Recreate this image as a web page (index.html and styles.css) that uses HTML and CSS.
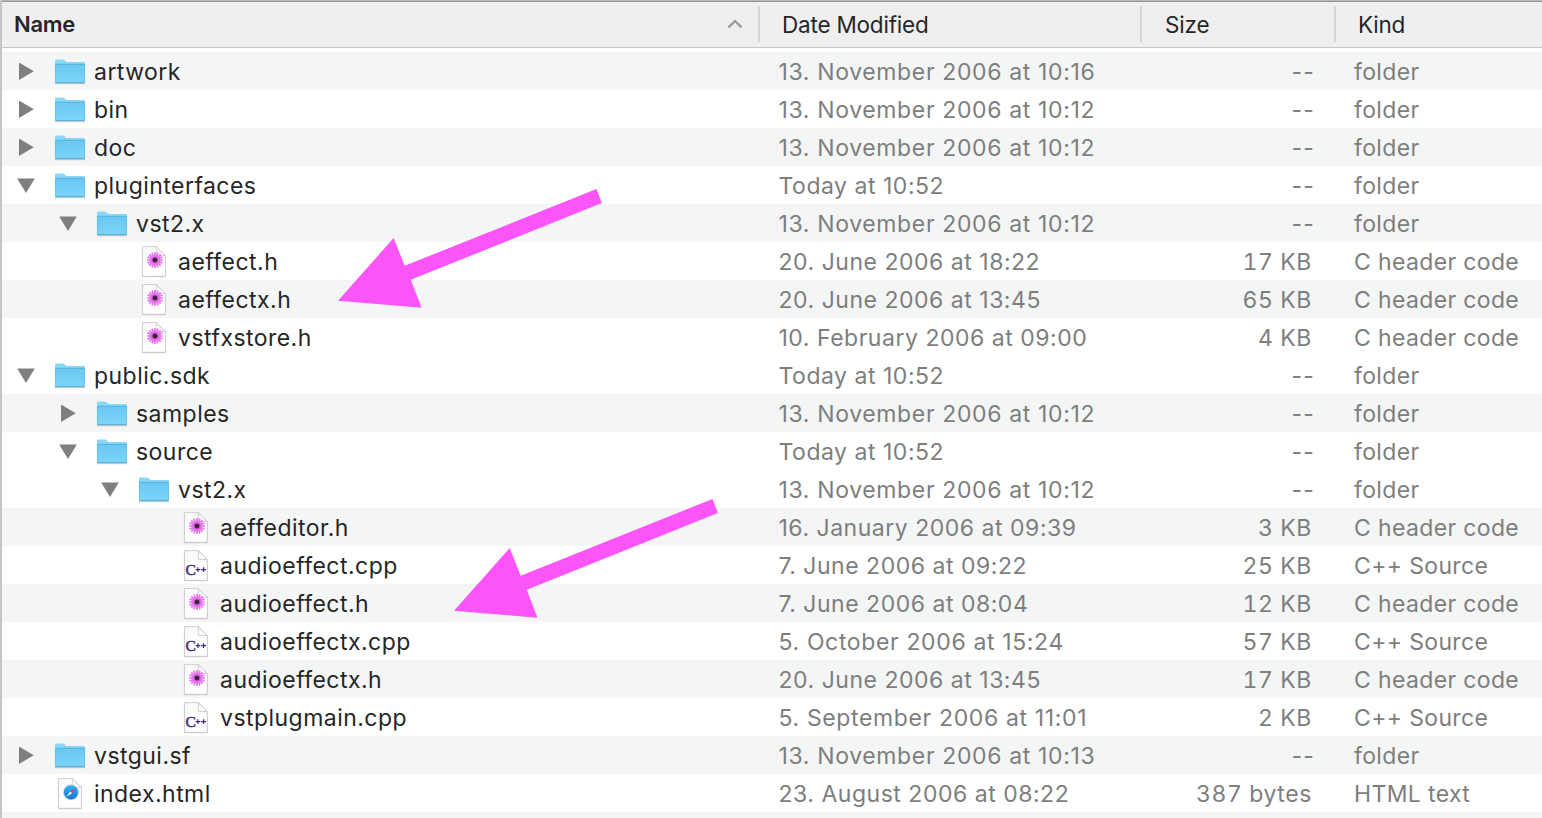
FILE: index.html
```html
<!DOCTYPE html>
<html lang="en">
<head>
<meta charset="utf-8">
<title>Files</title>
<link rel="stylesheet" href="styles.css">
</head>
<body>
<svg class="defs" aria-hidden="true">
  <defs>
    <linearGradient id="folder-fill" x1="0" y1="0" x2="0" y2="1"><stop offset="0" stop-color="#69c8f3"/><stop offset="1" stop-color="#7dd4f8"/></linearGradient>
    <linearGradient id="page-fill" x1="0" y1="0" x2="1" y2="1"><stop offset="0" stop-color="#f7f7f7"/><stop offset=".5" stop-color="#fff"/></linearGradient>
    <linearGradient id="compass-fill" x1="0" y1="0" x2="0" y2="1"><stop offset="0" stop-color="#2bb5f2"/><stop offset="1" stop-color="#1b6fdc"/></linearGradient>
  </defs>
  <symbol id="right" viewBox="0 0 18 18"><path d="M2 -.5L16.8 8.2L2 17Z" fill="#7f7f7f"/></symbol>
  <symbol id="down" viewBox="0 0 18 18"><path d="M.2 1.5H17.8L9 16Z" fill="#7f7f7f"/></symbol>
  <symbol id="folder" viewBox="0 0 32 32">
    <path d="M1 27H31V28.2H1Z" fill="#000" opacity=".2"/>
    <path d="M1 4.7Q1 3.5 2.2 3.5H9Q10 3.5 10.8 4.4L12 5.5Q12.6 6 13.6 6H29.8Q31 6 31 7.2V26Q31 27 30 27H2Q1 27 1 26Z" fill="#8ad8f8"/>
    <path d="M1 8.5H31V26Q31 27 30 27H2Q1 27 1 26Z" fill="url(#folder-fill)"/>
    <path d="M1 8.3H31M1.5 26.6H30.5" stroke="#4eaed8" stroke-width=".9" fill="none"/>
    <path d="M1.4 8V26M30.6 8V26" stroke="#61bde3" stroke-width=".6"/>
  </symbol>
  <symbol id="page" viewBox="0 0 32 32">
    <path d="M4.2 1.3H18.4L27.6 10.3V31.2H4.2Z" fill="#000" opacity=".16"/>
    <path d="M4.4 .6H18.4L27.4 9.6V30.3H4.4Z" fill="url(#page-fill)" stroke="#c4c4c4" stroke-width=".8"/>
    <path d="M18.3 .8V9.5H27.2Z" fill="#fafafa" stroke="#c6c6c6" stroke-width=".8"/>
  </symbol>
  <symbol id="header" viewBox="0 0 32 32">
    <use href="#page"/>
    <g transform="translate(17 14)">
      <circle r="5.5" fill="#f096f4"/>
      <path d="M0-8V8M-8 0H8M-5.7-5.7L5.7 5.7M-5.7 5.7L5.7-5.7M-3.1-7.4L3.1 7.4M3.1-7.4L-3.1 7.4M-7.4-3.1L7.4 3.1M-7.4 3.1L7.4-3.1" stroke="#e874ef" stroke-width="1.7"/>
      <path d="M0-4.4V4.4M-4.4 0H4.4M-3.1-3.1L3.1 3.1M-3.1 3.1L3.1-3.1" stroke="#cc5cd6" stroke-width=".8"/>
      <circle r="2.7" fill="#85307e"/><circle r="2.1" fill="#33252b"/>
    </g>
  </symbol>
  <symbol id="source" viewBox="0 0 32 32">
    <use href="#page"/>
    <text class="icon-letter" x="5.6" y="25.2">C</text>
    <path d="M15.6 19.7H20.4M18 17.3V22.1M21.2 19.7H26M23.6 17.3V22.1" stroke="#44267f" stroke-width="1.2"/>
  </symbol>
  <symbol id="html" viewBox="0 0 32 32">
    <use href="#page"/>
    <circle cx="17" cy="14.3" r="8" fill="#d0d8df"/>
    <circle cx="17" cy="14.3" r="7.1" fill="url(#compass-fill)"/>
    <path d="M21.6 9.8L18 15.2L16.2 13.4Z" fill="#ef3d42"/>
    <path d="M12.4 18.8L16.2 13.4L18 15.2Z" fill="#fff"/>
  </symbol>
</svg>
<main class="finder">
  <div class="topline"></div>
  <header class="head">
    <div class="col col-name">Name<svg class="sort" viewBox="0 0 16 10"><path d="M1.5 8.3L8 2L14.5 8.3" fill="none" stroke="#9a9a9a" stroke-width="2.3"/></svg></div>
    <div class="col">Date Modified</div>
    <div class="col col-size">Size</div>
    <div class="col">Kind</div>
  </header>
  <div class="rows">
    <div class="row alt"><div class="name"><svg class="tri"><use href="#right"/></svg><svg class="icon"><use href="#folder"/></svg><span>artwork</span></div><div class="date wide">13. November 2006 at 10:16</div><div class="size none">--</div><div class="kind">folder</div></div>
    <div class="row"><div class="name"><svg class="tri"><use href="#right"/></svg><svg class="icon"><use href="#folder"/></svg><span>bin</span></div><div class="date wide">13. November 2006 at 10:12</div><div class="size none">--</div><div class="kind">folder</div></div>
    <div class="row alt"><div class="name"><svg class="tri"><use href="#right"/></svg><svg class="icon"><use href="#folder"/></svg><span>doc</span></div><div class="date wide">13. November 2006 at 10:12</div><div class="size none">--</div><div class="kind">folder</div></div>
    <div class="row"><div class="name"><svg class="tri"><use href="#down"/></svg><svg class="icon"><use href="#folder"/></svg><span>pluginterfaces</span></div><div class="date">Today at 10:52</div><div class="size none">--</div><div class="kind">folder</div></div>
    <div class="row alt"><div class="name l1"><svg class="tri"><use href="#down"/></svg><svg class="icon"><use href="#folder"/></svg><span>vst2.x</span></div><div class="date wide">13. November 2006 at 10:12</div><div class="size none">--</div><div class="kind">folder</div></div>
    <div class="row"><div class="name l2"><svg class="tri"></svg><svg class="icon"><use href="#header"/></svg><span>aeffect.h</span></div><div class="date">20. June 2006 at 18:22</div><div class="size">17 KB</div><div class="kind">C header code</div></div>
    <div class="row alt"><div class="name l2"><svg class="tri"></svg><svg class="icon"><use href="#header"/></svg><span>aeffectx.h</span></div><div class="date">20. June 2006 at 13:45</div><div class="size">65 KB</div><div class="kind">C header code</div></div>
    <div class="row"><div class="name l2"><svg class="tri"></svg><svg class="icon"><use href="#header"/></svg><span>vstfxstore.h</span></div><div class="date">10. February 2006 at 09:00</div><div class="size">4 KB</div><div class="kind">C header code</div></div>
    <div class="row"><div class="name"><svg class="tri"><use href="#down"/></svg><svg class="icon"><use href="#folder"/></svg><span>public.sdk</span></div><div class="date">Today at 10:52</div><div class="size none">--</div><div class="kind">folder</div></div>
    <div class="row alt"><div class="name l1"><svg class="tri"><use href="#right"/></svg><svg class="icon"><use href="#folder"/></svg><span>samples</span></div><div class="date wide">13. November 2006 at 10:12</div><div class="size none">--</div><div class="kind">folder</div></div>
    <div class="row"><div class="name l1"><svg class="tri"><use href="#down"/></svg><svg class="icon"><use href="#folder"/></svg><span>source</span></div><div class="date">Today at 10:52</div><div class="size none">--</div><div class="kind">folder</div></div>
    <div class="row"><div class="name l2"><svg class="tri"><use href="#down"/></svg><svg class="icon"><use href="#folder"/></svg><span>vst2.x</span></div><div class="date wide">13. November 2006 at 10:12</div><div class="size none">--</div><div class="kind">folder</div></div>
    <div class="row alt"><div class="name l3"><svg class="tri"></svg><svg class="icon"><use href="#header"/></svg><span>aeffeditor.h</span></div><div class="date">16. January 2006 at 09:39</div><div class="size">3 KB</div><div class="kind">C header code</div></div>
    <div class="row"><div class="name l3"><svg class="tri"></svg><svg class="icon"><use href="#source"/></svg><span>audioeffect.cpp</span></div><div class="date">7. June 2006 at 09:22</div><div class="size">25 KB</div><div class="kind">C++ Source</div></div>
    <div class="row alt"><div class="name l3"><svg class="tri"></svg><svg class="icon"><use href="#header"/></svg><span>audioeffect.h</span></div><div class="date">7. June 2006 at 08:04</div><div class="size">12 KB</div><div class="kind">C header code</div></div>
    <div class="row"><div class="name l3"><svg class="tri"></svg><svg class="icon"><use href="#source"/></svg><span>audioeffectx.cpp</span></div><div class="date wide">5. October 2006 at 15:24</div><div class="size">57 KB</div><div class="kind">C++ Source</div></div>
    <div class="row alt"><div class="name l3"><svg class="tri"></svg><svg class="icon"><use href="#header"/></svg><span>audioeffectx.h</span></div><div class="date">20. June 2006 at 13:45</div><div class="size">17 KB</div><div class="kind">C header code</div></div>
    <div class="row"><div class="name l3"><svg class="tri"></svg><svg class="icon"><use href="#source"/></svg><span>vstplugmain.cpp</span></div><div class="date wide">5. September 2006 at 11:01</div><div class="size">2 KB</div><div class="kind">C++ Source</div></div>
    <div class="row alt"><div class="name"><svg class="tri"><use href="#right"/></svg><svg class="icon"><use href="#folder"/></svg><span>vstgui.sf</span></div><div class="date wide">13. November 2006 at 10:13</div><div class="size none">--</div><div class="kind">folder</div></div>
    <div class="row"><div class="name"><svg class="tri"></svg><svg class="icon"><use href="#html"/></svg><span>index.html</span></div><div class="date">23. August 2006 at 08:22</div><div class="size">387 bytes</div><div class="kind">HTML text</div></div>
    <div class="row alt"></div>
  </div>
  <svg class="arrows" viewBox="0 0 1542 818">
    <g fill="#fb55fa">
      <path id="arrow" d="M338 300.7L393.7 238L404.7 265.8L596.5 189L601.8 203L410.8 279.8L421.5 307.7Z"/>
      <use href="#arrow" x="116" y="310"/>
    </g>
  </svg>
</main>
</body>
</html>
```

FILE: styles.css
```css
* { box-sizing: border-box; }
body { margin: 0; background: #fff; overflow: hidden; }
.defs { position: absolute; width: 0; height: 0; }
.finder {
  position: relative;
  width: 1542px;
  height: 818px;
  overflow: hidden;
  border-left: 2px solid #c8c5c8;
  font-family: Inter, "Liberation Sans", sans-serif;
  font-size: 23px;
  color: #262626;
}
.topline { height: 2px; background: linear-gradient(#b8b8b8 50%, #989898 50%); }
.head {
  display: grid;
  grid-template-columns: 758px 382px 194px 1fr;
  height: 46px;
  padding-top: 4px;
  background: #efefef;
  border-bottom: 1px solid #c6c6c6;
}
.col {
  display: flex;
  align-items: center;
  height: 36px;
  padding: 0 0 0 22px;
  border-right: 2px solid #d6d6d6;
  font-size: 22.5px;
  letter-spacing: -.2px;
}
.col:last-child { border-right: 0; }
.col-size { padding-left: 23px; }
.col-name {
  justify-content: space-between;
  padding: 0 15px 0 12px;
  font-size: 22px;
  font-weight: 600;
  letter-spacing: -.3px;
}
.sort { width: 16px; height: 10px; }
.rows { padding-top: 4px; }
.row {
  display: grid;
  grid-template-columns: 776.5px 410.5px 123px 1fr;
  height: 38px;
  line-height: 40px;
  white-space: nowrap;
}
.alt { background: #f4f5f5; }
.name { display: flex; align-items: center; padding-left: 15px; letter-spacing: .46px; }
.l1 { padding-left: 57px; }
.l2 { padding-left: 99px; }
.l3 { padding-left: 141px; }
.tri { width: 18px; height: 18px; margin-right: 19px; overflow: visible; }
.icon { width: 32px; height: 32px; margin-right: 8px; }
.icon-letter { font: 400 15.5px "Liberation Serif", serif; letter-spacing: 0; fill: #44267f; stroke: #44267f; stroke-width: .5px; }
.date, .size, .kind { color: #7e7e7e; }
.date { letter-spacing: .52px; }
.wide { letter-spacing: .64px; }
.size { text-align: right; letter-spacing: .6px; font-variant-numeric: tabular-nums; }
.none { margin-right: -3px; letter-spacing: 1.2px; font-variant-numeric: normal; }
.kind { padding-left: 42px; letter-spacing: .36px; }
.arrows { position: absolute; top: 0; left: -2px; width: 1542px; height: 818px; }
```
